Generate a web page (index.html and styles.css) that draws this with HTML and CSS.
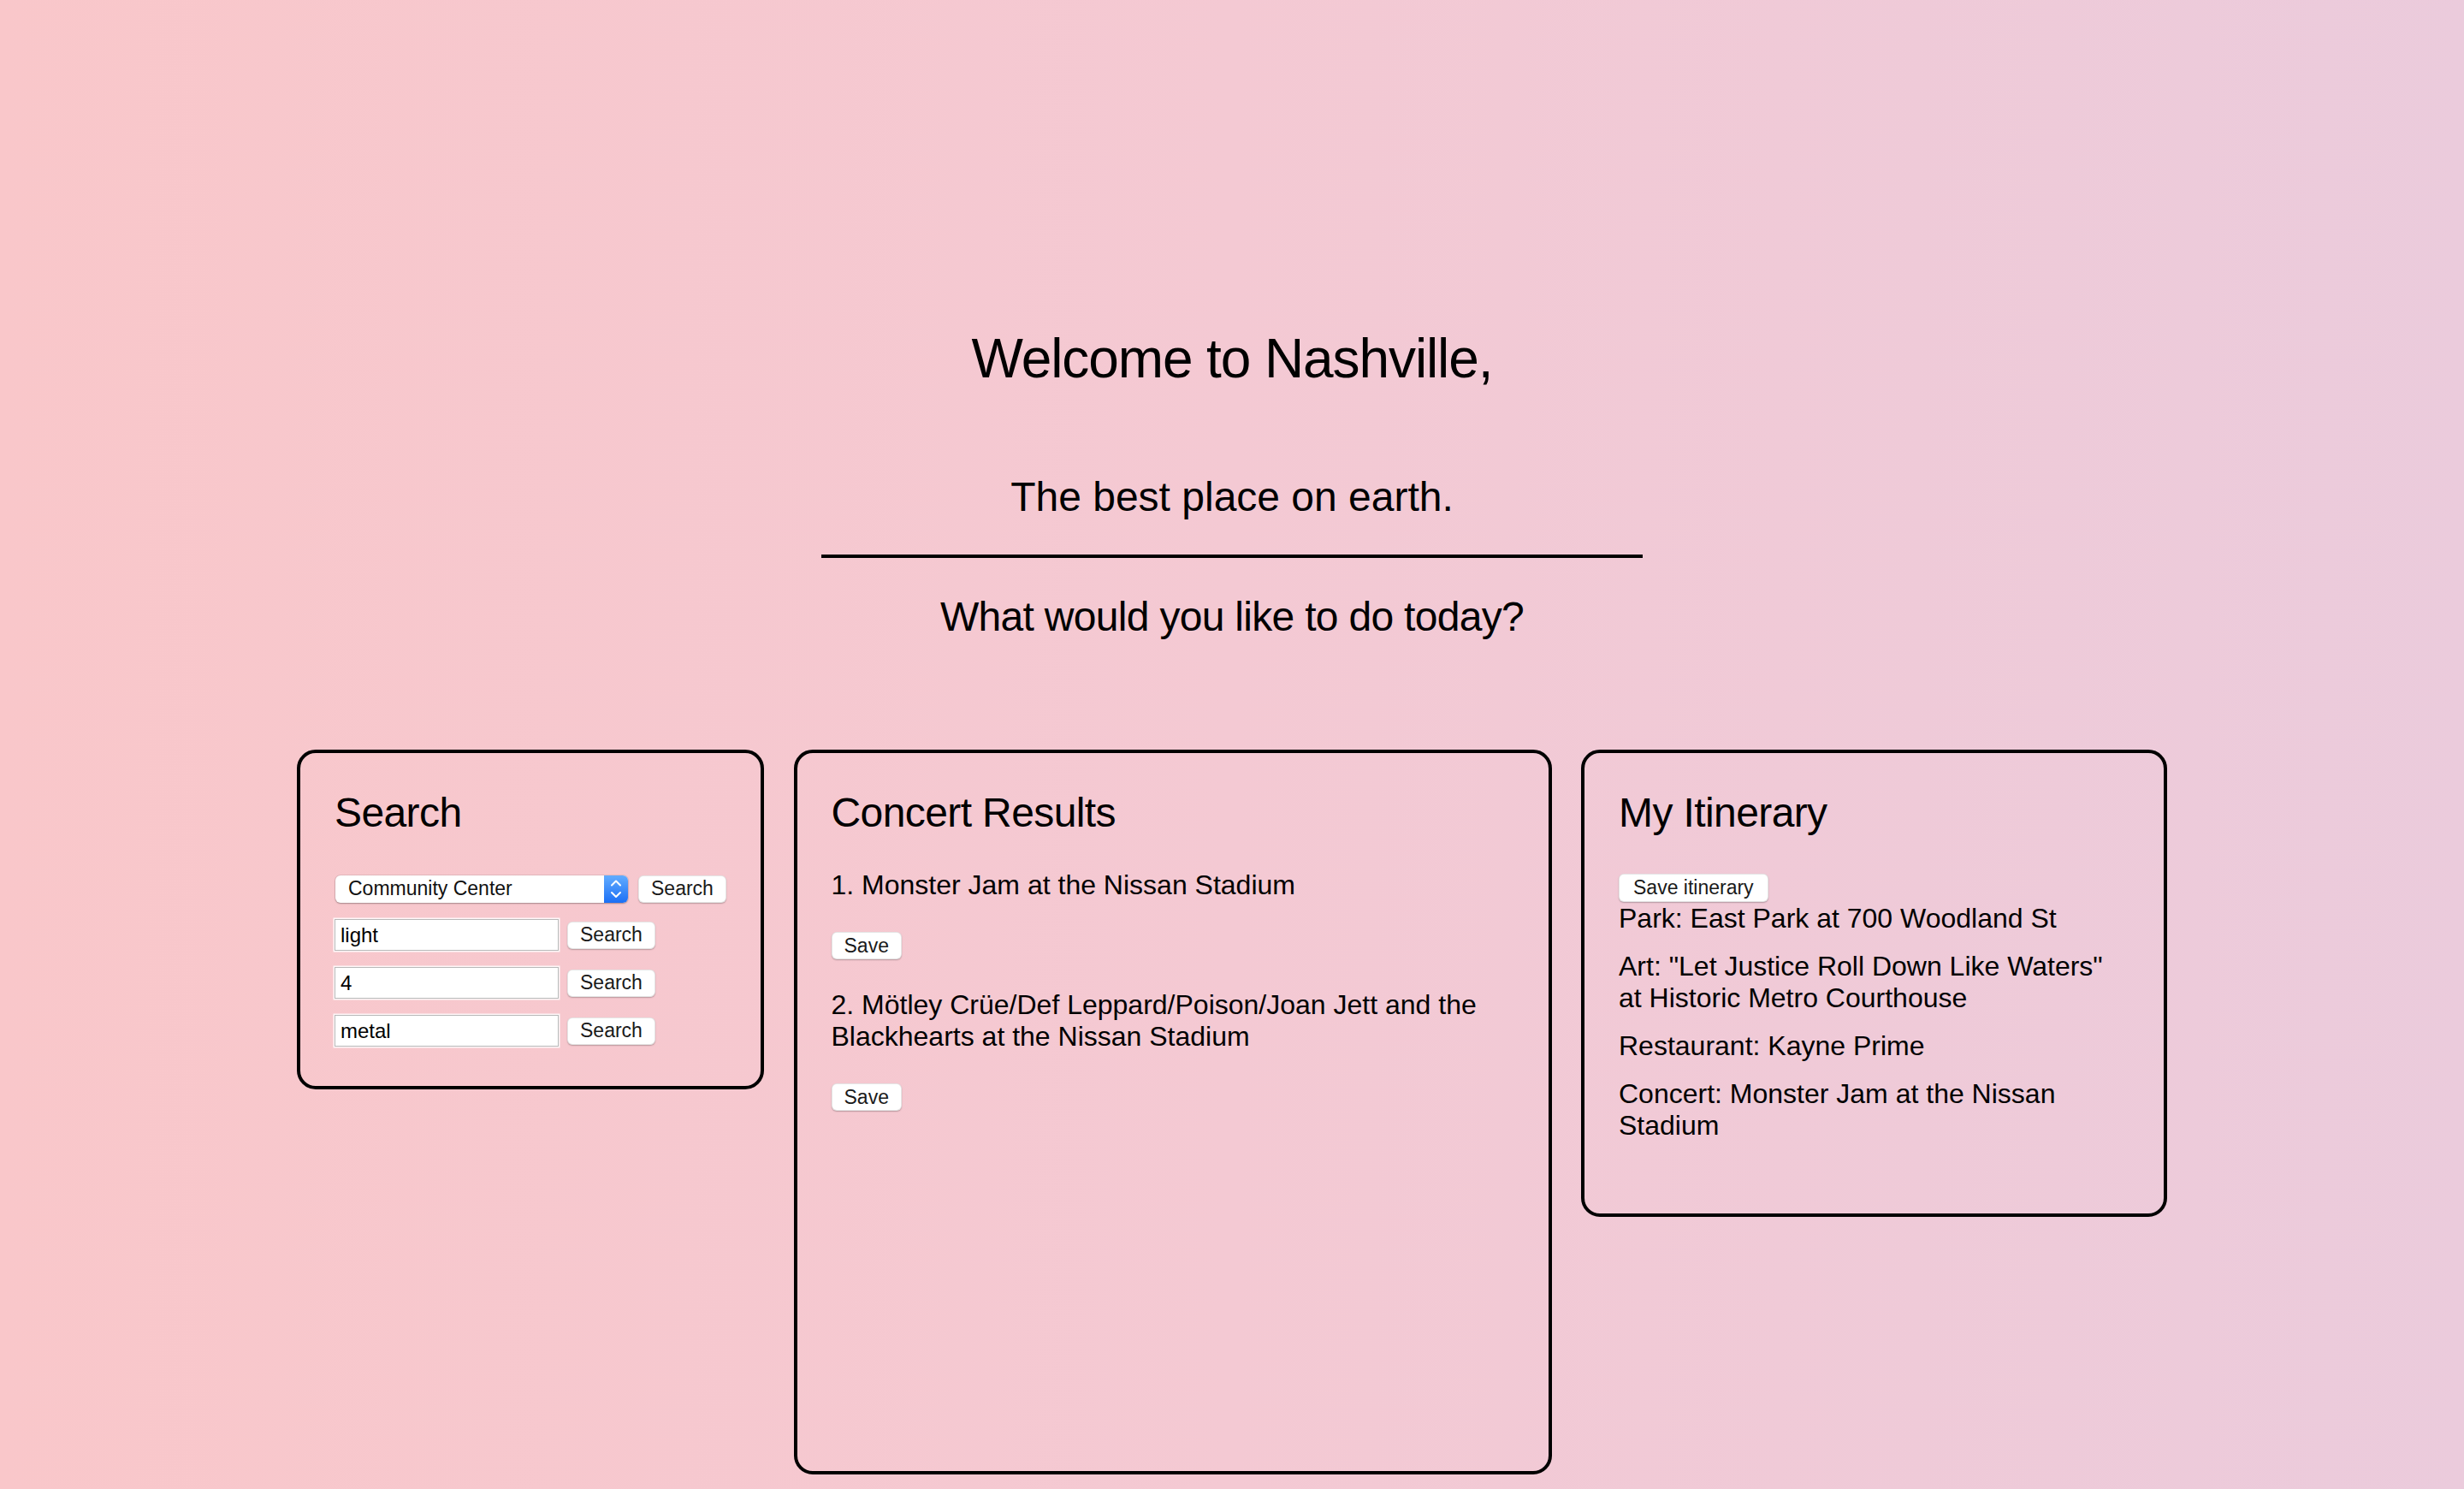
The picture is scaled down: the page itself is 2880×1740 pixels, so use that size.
FILE: index.html
```html
<!DOCTYPE html>
<html lang="en">
<head>
<meta charset="utf-8">
<title>Welcome to Nashville</title>
<link rel="stylesheet" href="styles.css">
</head>
<body>
<header class="hero">
  <h1 class="hero-title">Welcome to Nashville,</h1>
  <h2 class="hero-sub">The best place on earth.</h2>
  <hr class="hero-rule">
  <h2 class="hero-question">What would you like to do today?</h2>
</header>
<main class="panels">
  <section class="card card-search">
    <h2 class="card-title">Search</h2>
    <div class="search-rows">
      <div class="search-row search-row-select">
        <div class="select">
          <span class="select-label">Community Center</span>
          <span class="select-arrow">
            <svg width="28" height="32" viewBox="0 0 28 32" fill="none" stroke="#fff" stroke-width="2" stroke-linecap="round" stroke-linejoin="round"><polyline points="9,11.5 14,6.5 19,11.5"/><polyline points="9,20 14,25 19,20"/></svg>
          </span>
        </div>
        <button class="btn">Search</button>
      </div>
      <div class="search-row">
        <input class="text-input" type="text" value="light">
        <button class="btn">Search</button>
      </div>
      <div class="search-row">
        <input class="text-input" type="text" value="4">
        <button class="btn">Search</button>
      </div>
      <div class="search-row">
        <input class="text-input" type="text" value="metal">
        <button class="btn">Search</button>
      </div>
    </div>
  </section>

  <section class="card card-concert">
    <h2 class="card-title">Concert Results</h2>
    <div class="results">
      <div class="result">
        <p class="result-text">1. Monster Jam at the Nissan Stadium</p>
        <button class="btn btn-save">Save</button>
      </div>
      <div class="result">
        <p class="result-text">2. Mötley Crüe/Def Leppard/Poison/Joan Jett and the Blackhearts at the Nissan Stadium</p>
        <button class="btn btn-save">Save</button>
      </div>
    </div>
  </section>

  <section class="card card-itinerary">
    <h2 class="card-title">My Itinerary</h2>
    <button class="btn btn-itinerary">Save itinerary</button>
    <div class="itin-list">
      <p class="itin-item">Park: East Park at 700 Woodland St</p>
      <p class="itin-item">Art: "Let Justice Roll Down Like Waters" at Historic Metro Courthouse</p>
      <p class="itin-item">Restaurant: Kayne Prime</p>
      <p class="itin-item">Concert: Monster Jam at the Nissan Stadium</p>
    </div>
  </section>
</main>
</body>
</html>
```

FILE: styles.css
```css
html {
  background: linear-gradient(to right, #f9c7ca 0%, #f4c9d3 50%, #ebcbdc 100%);
  min-height: 100%;
}

body {
  margin: 0;
  font-family: "Liberation Sans", Arial, sans-serif;
  color: #000;
}

.hero {
  text-align: center;
  padding-top: 382px;
}

.hero-title {
  margin: 0;
  font-size: 64px;
  font-weight: 400;
  line-height: 74px;
  letter-spacing: -1.1px;
}

.hero-sub,
.hero-question {
  margin: 0;
  font-size: 48px;
  font-weight: 400;
  line-height: 55px;
}

.hero-sub {
  margin-top: 97px;
}

.hero-question {
  letter-spacing: -0.7px;
}

.hero-rule {
  width: 960px;
  height: 4px;
  border: 0;
  background: #000;
  margin: 40px auto 41px;
}

.panels {
  display: flex;
  justify-content: center;
  align-items: flex-start;
  gap: 34.5px;
  margin-top: 128px;
}

.card {
  box-sizing: border-box;
  border: 4px solid #000;
  border-radius: 22px;
  padding: 42px 40px 40px;
}

.card-title {
  margin: 0;
  font-size: 48px;
  font-weight: 400;
  line-height: 55px;
  letter-spacing: -0.6px;
}

.card-search {
  width: 546px;
  padding-bottom: 46px;
}

.card-concert {
  width: 886px;
  height: 847px;
}

.card-itinerary {
  width: 685px;
  padding-bottom: 84px;
}

/* Search form */
.search-rows {
  margin-top: 45px;
  display: flex;
  flex-direction: column;
  gap: 19px;
}

.search-row {
  display: flex;
  align-items: center;
  height: 37px;
  gap: 10px;
}

.search-row-select {
  height: 33px;
  gap: 12px;
}

.select {
  box-sizing: border-box;
  width: 342px;
  height: 32px;
  margin-left: 1px;
  display: flex;
  align-items: center;
  background: #fff;
  border-radius: 6px;
  box-shadow: 0 0 0 1px rgba(0, 0, 0, 0.07), 0 1px 2px rgba(0, 0, 0, 0.28);
  overflow: hidden;
}

.select-label {
  flex: 1;
  padding-left: 15px;
  font-size: 23px;
  color: #111;
}

.select-arrow {
  width: 28px;
  height: 32px;
  display: flex;
  background: linear-gradient(#62acff, #1b6ff5);
}

.btn {
  box-sizing: border-box;
  height: 32px;
  padding: 0 14px;
  font-family: inherit;
  font-size: 23px;
  line-height: 1;
  color: #1a1a1a;
  background: #fff;
  border: 1px solid rgba(0, 0, 0, 0.1);
  border-radius: 6px;
  box-shadow: 0 1px 1.5px rgba(0, 0, 0, 0.25);
}

.text-input {
  box-sizing: border-box;
  width: 262px;
  height: 37px;
  padding: 0 6px;
  font-family: inherit;
  font-size: 24px;
  color: #000;
  background: #fff;
  border: 1px solid #b8b8b8;
  box-shadow: 0 0 0 1.5px rgba(255, 255, 255, 0.85);
  outline: none;
}

/* Concert results */
.results {
  margin-top: 39px;
  display: flex;
  flex-direction: column;
  gap: 35px;
}

.result-text {
  margin: 0;
  font-size: 32px;
  line-height: 37px;
}

.btn-save {
  display: block;
  margin-top: 36px;
}

/* Itinerary */
.btn-itinerary {
  display: block;
  height: 33px;
  margin-top: 44px;
  padding: 0 16px;
}

.itin-list {
  margin-top: 1px;
  display: flex;
  flex-direction: column;
  gap: 19px;
}

.itin-item {
  margin: 0;
  font-size: 32px;
  line-height: 37px;
}
```
